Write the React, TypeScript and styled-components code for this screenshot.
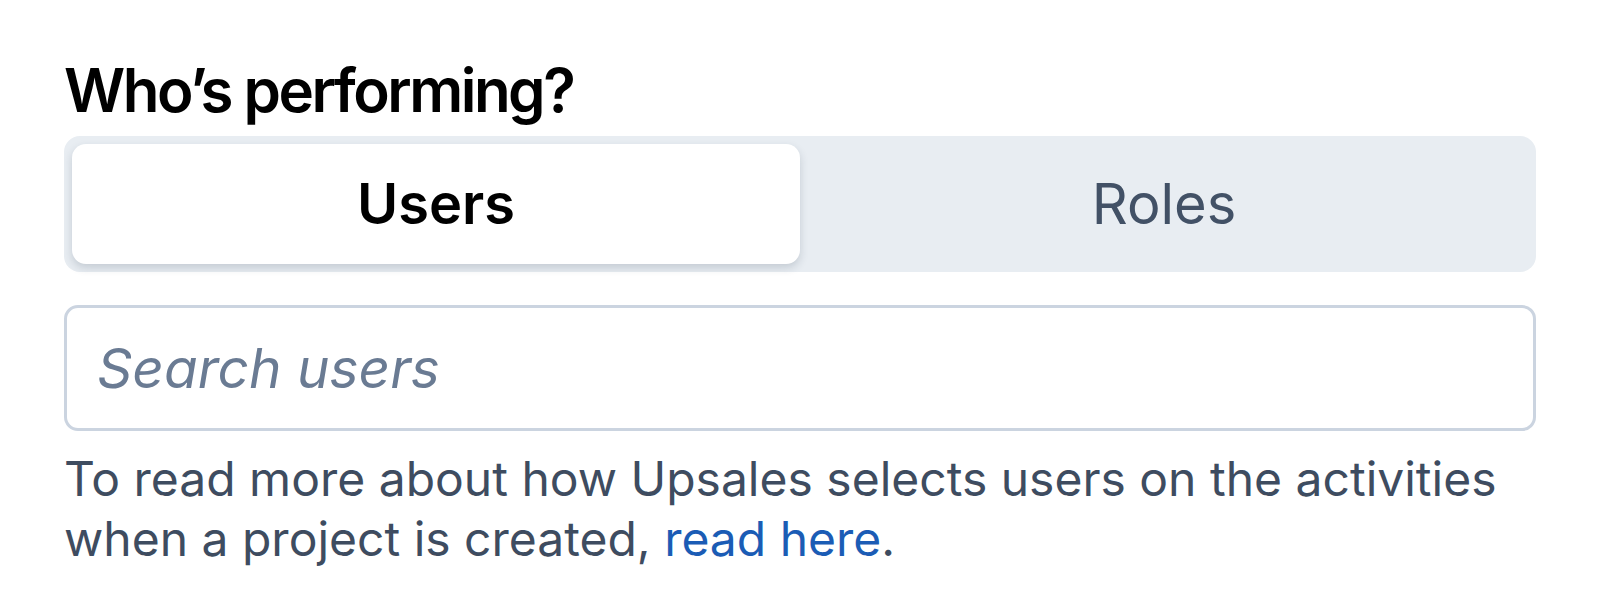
import styled, { createGlobalStyle } from "styled-components";
import { useState } from "react";

const GlobalStyle = createGlobalStyle`
  body {
    margin: 0;
    background: #fff;
    font-family: Inter, "Noto Sans", sans-serif;
  }
`;

const Panel = styled.div`
  padding: 50px 64px 48px;
  display: flex;
  flex-direction: column;
`;

const Heading = styled.h2`
  margin: 0 0 6px;
  font-size: 60px;
  line-height: 80px;
  font-weight: 600;
  letter-spacing: -2.5px;
  color: #000;
`;

const Segmented = styled.div`
  display: grid;
  grid-template-columns: 1fr 1fr;
  height: 136px;
  box-sizing: border-box;
  padding: 8px;
  background: #e8edf2;
  border-radius: 16px;
`;

const Segment = styled.button<{ $active: boolean }>`
  border: none;
  border-radius: 14px;
  font-family: inherit;
  font-size: 56px;
  cursor: pointer;
  font-weight: ${(p) => (p.$active ? 600 : 400)};
  color: ${(p) => (p.$active ? "#000" : "#425166")};
  background: ${(p) => (p.$active ? "#fff" : "transparent")};
  box-shadow: ${(p) =>
    p.$active ? "0 4px 8px rgba(40, 55, 80, 0.18)" : "none"};
`;

const SearchInput = styled.input`
  margin-top: 33px;
  height: 126px;
  box-sizing: border-box;
  border: 3px solid #cbd4e0;
  border-radius: 14px;
  padding: 0 30px;
  font-family: inherit;
  font-size: 55px;
  color: #1f2a3a;
  outline: none;

  &::placeholder {
    font-style: italic;
    color: #6a7b93;
  }
`;

const Help = styled.p`
  margin: 18px 0 0;
  font-size: 48px;
  line-height: 60px;
  color: #3e4c60;
`;

const Link = styled.a`
  color: #1b5cb5;
  text-decoration: none;
`;

export default function App() {
  const [mode, setMode] = useState<"users" | "roles">("users");

  return (
    <>
      <GlobalStyle />
      <Panel>
        <Heading>Who’s performing?</Heading>
        <Segmented>
          <Segment $active={mode === "users"} onClick={() => setMode("users")}>
            Users
          </Segment>
          <Segment $active={mode === "roles"} onClick={() => setMode("roles")}>
            Roles
          </Segment>
        </Segmented>
        <SearchInput placeholder={mode === "users" ? "Search users" : "Search roles"} />
        <Help>
          To read more about how Upsales selects users on the activities when a
          project is created, <Link href="#">read here</Link>.
        </Help>
      </Panel>
    </>
  );
}
